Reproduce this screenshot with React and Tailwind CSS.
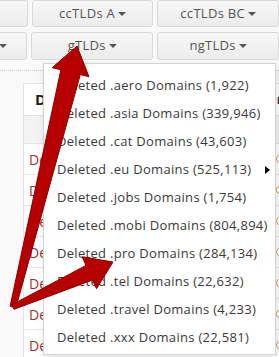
import React from "react";

const Caret = () => (
  <span className="inline-block w-0 h-0 ml-[3px] border-t-[4px] border-x-[4px] border-x-transparent border-t-[#555] align-middle" />
);

const TopButton = ({ label, align = "center" }) => (
  <div
    className={`w-[132px] h-full flex items-center rounded-[3px] border border-[#d9d9d9] bg-gradient-to-b from-[#f8f8f8] to-[#ececec] text-[13px] tracking-[0.3px] text-[#555] ${
      align === "end" ? "justify-end pr-[19px]" : "justify-center"
    }`}
  >
    <span>{label}</span>
    <Caret />
  </div>
);

const items = [
  "Deleted .aero Domains (1,922)",
  "Deleted .asia Domains (339,946)",
  "Deleted .cat Domains (43,603)",
  "Deleted .eu Domains (525,113)",
  "Deleted .jobs Domains (1,754)",
  "Deleted .mobi Domains (804,894)",
  "Deleted .pro Domains (284,134)",
  "Deleted .tel Domains (22,632)",
  "Deleted .travel Domains (4,233)",
  "Deleted .xxx Domains (22,581)",
];

const App = () => {
  return (
    <div className="relative w-[279px] h-[357px] overflow-hidden bg-[#f9f9f9] font-['Open_Sans',sans-serif]">
      {/* Button rows */}
      <div className="flex flex-col gap-[5px] ml-[-96px]">
        <div className="flex gap-[4px] h-[27px]">
          <div className="w-[132px] h-full flex items-center justify-end pr-[27px] rounded-[3px] border border-[#d9d9d9] bg-gradient-to-b from-[#f8f8f8] to-[#ececec]">
            <Caret />
          </div>
          <TopButton label="ccTLDs A" />
          <TopButton label="ccTLDs BC" />
        </div>
        <div className="flex gap-[4px] h-[28px]">
          <TopButton label="ccTLDs XYZ" align="end" />
          <TopButton label="gTLDs" />
          <TopButton label="ngTLDs" />
        </div>
      </div>

      <div className="mt-[10px] border-t border-dotted border-[#c8c8c8]" />

      {/* Table behind the menu */}
      <div className="mt-[12px] ml-[23px] w-[300px] border-l border-t border-[#e3e3e3] bg-white">
        <div className="flex h-[32px] items-center border-b border-[#e3e3e3]">
          <div className="w-[251px] pl-[11px] text-[15px] font-bold text-[#222]">Domain</div>
          <div className="pl-[2px] text-[13px] font-bold text-[#1f2a44]">Dropped</div>
        </div>
        <div className="h-[28px] bg-[#f3f3f3] border-b border-[#e3e3e3]" />
        {Array.from({ length: 7 }).map((_, i) => (
          <div key={i} className="flex h-[31px] items-center border-b border-[#e6e6e6]">
            <div className="w-[251px] pl-[5px] text-[14px] text-[#a3302f]">Deleted</div>
            <div className="ml-[1px] w-[10px] h-[10px] rounded-full border-[1.5px] border-[#e0a050]" />
          </div>
        ))}
      </div>

      {/* Dropdown menu */}
      <div className="absolute left-[43px] top-[63px] w-[233px] pt-[8px] pb-[2px] bg-white border border-[#d4d4d4] shadow-[2px_4px_8px_rgba(0,0,0,0.12)]">
        {items.map((t, i) => (
          <div key={t} className="relative h-[28px] flex items-center pl-[13px] text-[13px] tracking-[0.3px] text-[#3a3a3a] whitespace-nowrap">
            {t}
            {i === 3 && (
              <span className="absolute right-[5px] top-[10px] w-0 h-0 border-y-[4px] border-y-transparent border-l-[5px] border-l-black" />
            )}
          </div>
        ))}
      </div>

      {/* Red annotation arrows */}
      <svg className="absolute inset-0 pointer-events-none" width="279" height="357" viewBox="0 0 279 357">
        <polygon
          points="10.1,306.3 60.9,69.8 52.2,67.7 77,46 89,76.7 80.3,74.6 15.9,307.7"
          fill="#b60000"
          stroke="#8c0000"
          strokeWidth="1"
          strokeLinejoin="miter"
        />
        <polygon
          points="12,304.7 86,265.4 82.1,256.7 113,262 96.5,288.7 92.6,280 14,309.3"
          fill="#b60000"
          stroke="#8c0000"
          strokeWidth="1"
          strokeLinejoin="miter"
        />
      </svg>
    </div>
  );
};

export default App;
